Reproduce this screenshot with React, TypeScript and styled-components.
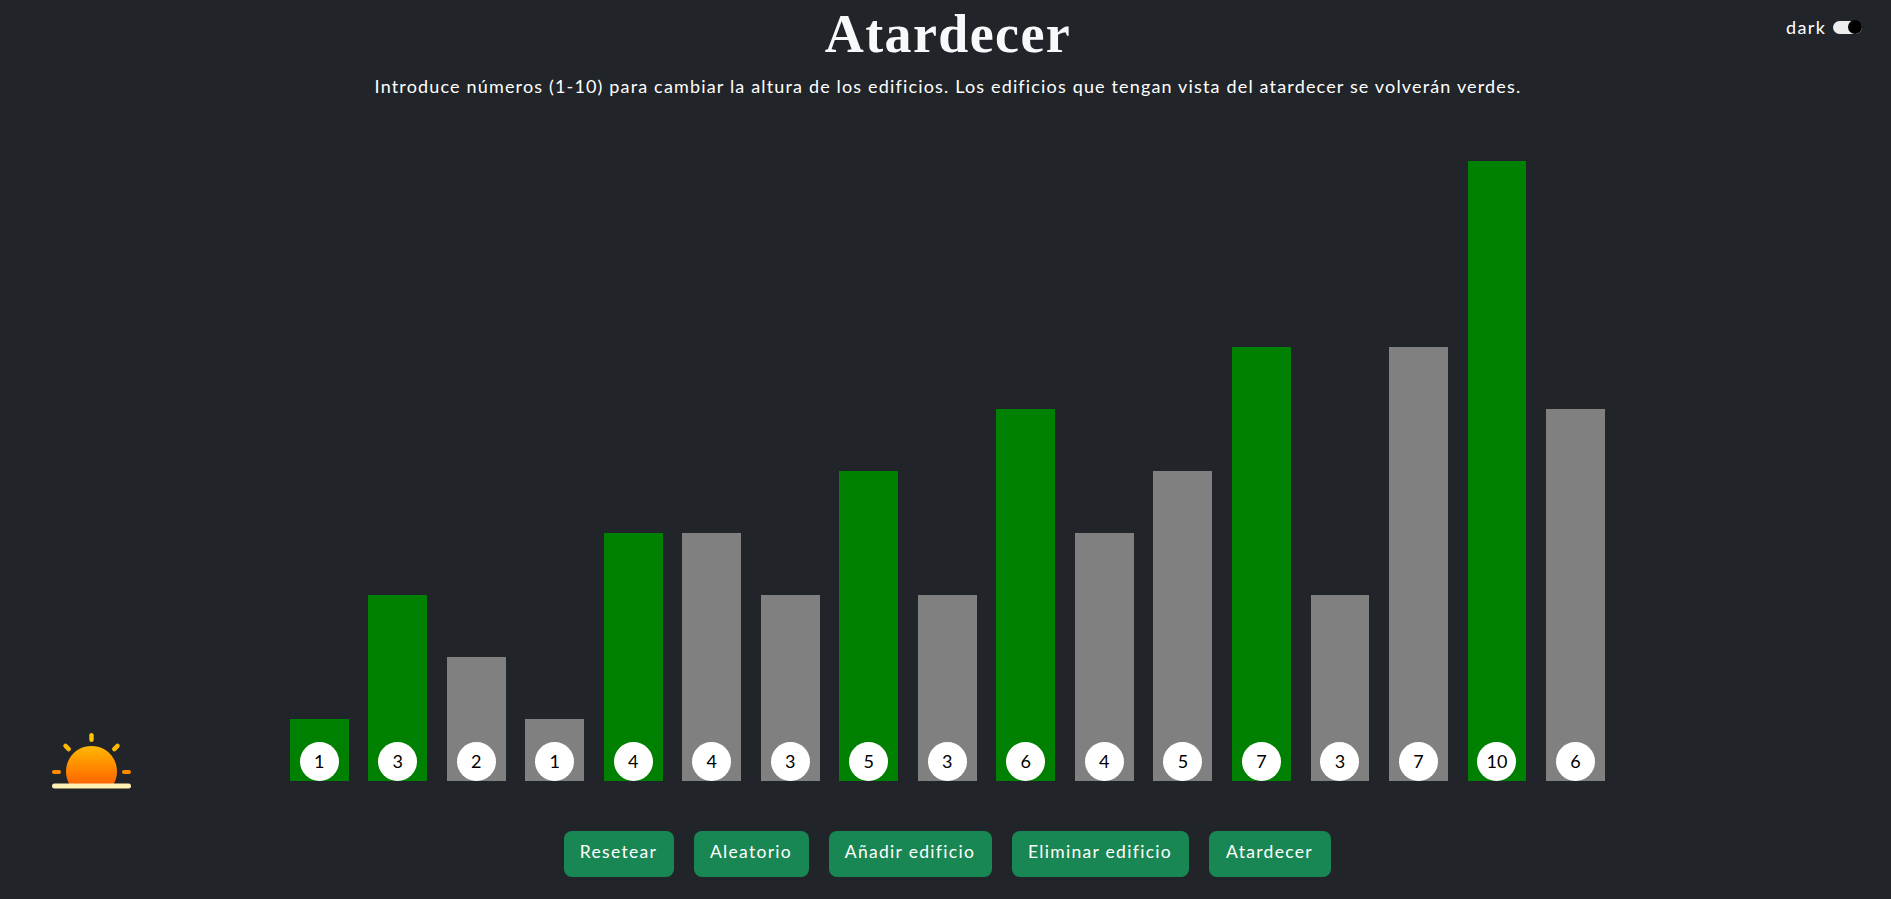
import { FC } from 'react';
import styled, { createGlobalStyle } from 'styled-components';

const GlobalStyle = createGlobalStyle`
  html, body {
    margin: 0;
    padding: 0;
    background: #212529;
  }
  body {
    font-family: "Lato", "Noto Sans", sans-serif;
    color: #ffffff;
  }
`;

const Page = styled.div`
  position: relative;
  box-sizing: border-box;
  width: 1891px;
  height: 899px;
  padding-left: 5px;
  overflow: hidden;
  display: flex;
  flex-direction: column;
  align-items: center;
`;

const Title = styled.h1`
  margin: 5px 0 0;
  font-family: "Liberation Serif", serif;
  font-size: 54px;
  font-weight: 700;
  line-height: 58px;
  letter-spacing: 1.4px;
  color: #f8f9fa;
`;

const Subtitle = styled.p`
  margin: 11px 0 0;
  font-size: 18px;
  font-weight: 400;
  line-height: 24px;
  letter-spacing: 1.16px;
`;

const ThemeToggle = styled.label`
  position: absolute;
  top: 15px;
  left: 1786px;
  display: flex;
  align-items: center;
  gap: 7px;
  font-size: 18px;
  line-height: 24px;
  letter-spacing: 1.4px;
`;

const SwitchTrack = styled.span`
  width: 29px;
  height: 13px;
  border-radius: 7px;
  background: #eeeeee;
  display: flex;
  justify-content: flex-end;
`;

const SwitchThumb = styled.span`
  width: 14px;
  height: 14px;
  margin-top: -0.5px;
  border-radius: 50%;
  background: #000000;
`;

const ChartRow = styled.section`
  align-self: stretch;
  display: flex;
  align-items: flex-end;
  padding-left: 46.8px;
  margin-top: 63px;
`;

const SunIcon = styled.svg`
  width: 79px;
  height: 56px;
  flex: none;
  margin-right: 159px;
`;

const Skyline = styled.div`
  display: flex;
  align-items: flex-end;
  gap: 19.73px;
  margin-bottom: 8px;
`;

const Building = styled.div<{ $level: number; $lit: boolean }>`
  width: 58.8px;
  height: ${({ $level }) => $level * 62}px;
  background: ${({ $lit }) => ($lit ? '#008000' : '#808080')};
  display: flex;
  align-items: flex-end;
  justify-content: center;
`;

const Floors = styled.span`
  width: 39px;
  height: 39px;
  border-radius: 50%;
  background: #ffffff;
  color: #000000;
  font-size: 18px;
  line-height: 38px;
  text-align: center;
`;

const Toolbar = styled.div`
  display: flex;
  gap: 20px;
  margin-top: 42px;
  margin-left: -2px;
`;

const ActionButton = styled.button<{ $width: number }>`
  width: ${({ $width }) => $width}px;
  height: 46px;
  padding: 0 0 5px;
  border: none;
  border-radius: 8px;
  background: #198754;
  color: #ffffff;
  font-family: "Lato", "Noto Sans", sans-serif;
  font-size: 17.5px;
  letter-spacing: 1.3px;
`;

const buildings = [
  { level: 1, lit: true },
  { level: 3, lit: true },
  { level: 2, lit: false },
  { level: 1, lit: false },
  { level: 4, lit: true },
  { level: 4, lit: false },
  { level: 3, lit: false },
  { level: 5, lit: true },
  { level: 3, lit: false },
  { level: 6, lit: true },
  { level: 4, lit: false },
  { level: 5, lit: false },
  { level: 7, lit: true },
  { level: 3, lit: false },
  { level: 7, lit: false },
  { level: 10, lit: true },
  { level: 6, lit: false },
];

const actions = [
  { label: 'Resetear', width: 110 },
  { label: 'Aleatorio', width: 115 },
  { label: 'Añadir edificio', width: 163 },
  { label: 'Eliminar edificio', width: 177 },
  { label: 'Atardecer', width: 122 },
];

const Sun: FC = () => (
  <SunIcon viewBox="0 0 79 56" aria-hidden="true">
    <defs>
      <linearGradient id="sunFill" x1="0" y1="0" x2="0" y2="1">
        <stop offset="0" stopColor="#ffb800" />
        <stop offset="1" stopColor="#ff6400" />
      </linearGradient>
    </defs>
    <path d="M17.3 51a25.5 25.5 0 1 1 44.4 0z" fill="url(#sunFill)" />
    <rect x="37.300" y="0" width="4.400" height="9" rx="2.200" fill="#ffc400" />
    <rect x="12.900" y="10" width="4.400" height="9" rx="2.200" fill="#ffb800" transform="rotate(-45 15.100 14.500)" />
    <rect x="61.700" y="10" width="4.400" height="9" rx="2.200" fill="#ffb800" transform="rotate(45 63.900 14.500)" />
    <rect x="0" y="37" width="9" height="4" rx="2" fill="#ff8a00" />
    <rect x="70" y="37" width="9" height="4" rx="2" fill="#ff8a00" />
    <rect x="0" y="50.500" width="79" height="5" rx="2.500" fill="#fff0b4" />
  </SunIcon>
);

const App: FC = () => (
  <Page>
    <GlobalStyle />
    <Title>Atardecer</Title>
    <Subtitle>
      Introduce números (1-10) para cambiar la altura de los edificios. Los edificios que tengan vista del atardecer se volverán verdes.
    </Subtitle>
    <ThemeToggle>
      dark
      <SwitchTrack>
        <SwitchThumb />
      </SwitchTrack>
    </ThemeToggle>
    <ChartRow>
      <Sun />
      <Skyline>
        {buildings.map((building, index) => (
          <Building key={index} $level={building.level} $lit={building.lit}>
            <Floors>{building.level}</Floors>
          </Building>
        ))}
      </Skyline>
    </ChartRow>
    <Toolbar>
      {actions.map((action) => (
        <ActionButton key={action.label} $width={action.width}>
          {action.label}
        </ActionButton>
      ))}
    </Toolbar>
  </Page>
);

export default App;
